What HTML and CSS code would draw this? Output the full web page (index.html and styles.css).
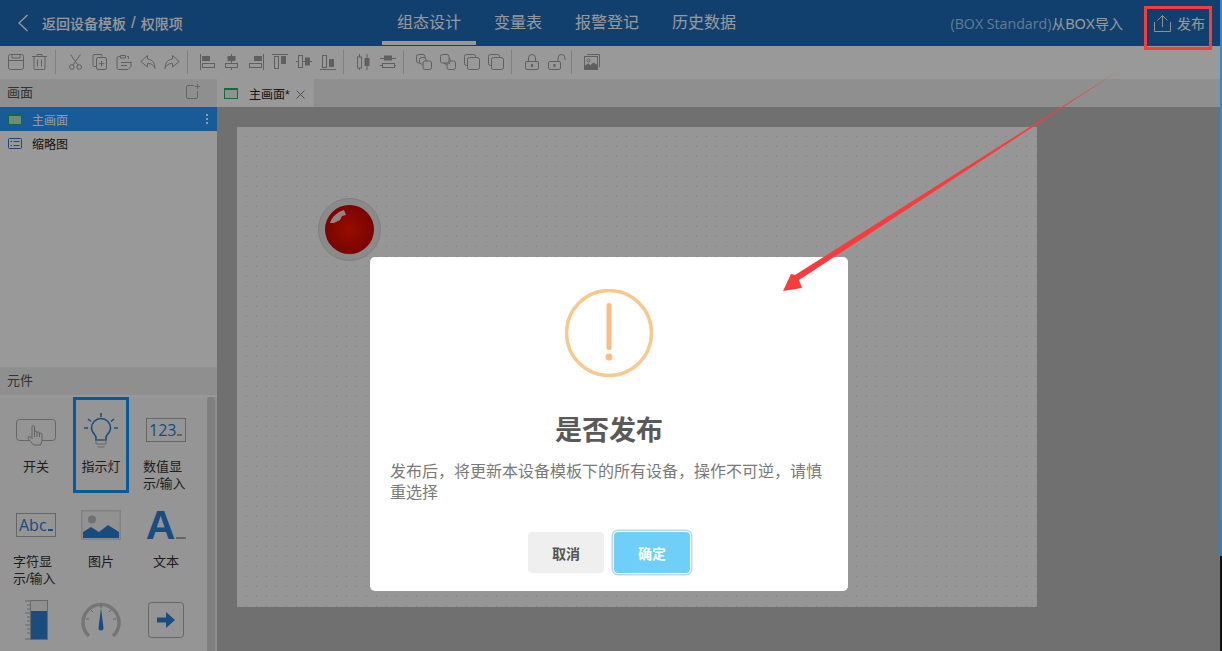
FILE: index.html
```html
<!DOCTYPE html>
<html lang="zh-CN">
<head>
  <meta charset="UTF-8">
  <title>组态设计</title>
  <link rel="stylesheet" href="styles.css">
</head>
<body>
  <div class="screen">
    <div class="app">
      <header class="topbar">
        <div class="back">
          <svg class="back-arrow" viewBox="0 0 12 18"><path d="M10.5 1 2 9l8.5 8"/></svg>
          <span class="crumb">返回设备模板</span><span class="slash">/</span><span class="crumb">权限项</span>
        </div>
        <nav class="nav">
          <a class="nav-item active">组态设计</a>
          <a class="nav-item">变量表</a>
          <a class="nav-item">报警登记</a>
          <a class="nav-item">历史数据</a>
        </nav>
        <div class="actions">
          <span class="box-name">(BOX Standard)</span><span class="box-import">从BOX导入</span>
          <span class="publish">
            <svg class="upload" viewBox="0 0 17 18"><path d="M.5 8v9.500h16V8M8.500 13V1.500M3.500 6.500l5-5 5 5"/></svg>
            发布
          </span>
        </div>
      </header>

      <div class="toolbar">
        <svg class="ico" viewBox="0 0 16 16"><rect x=".5" y=".5" width="15" height="15" rx="2"/><path d="M.5 6.500h15M4 .5v3.500h8V.5"/></svg>
        <svg class="ico" viewBox="0 0 16 16"><path d="M0 2.500h15M5 2.500V.5h5v2M2 2.500v12a1 1 0 0 0 1 1h9a1 1 0 0 0 1-1v-12M5.500 5.500v7M9.500 5.500v7"/></svg>
        <i class="sep"></i>
        <svg class="ico" viewBox="0 0 16 16"><path d="M2.500.5l7.500 10.500M12.500.5 5 11"/><circle cx="3.800" cy="13" r="2.300"/><circle cx="11.200" cy="13" r="2.300"/></svg>
        <svg class="ico" viewBox="0 0 16 16"><path d="M10 2.500V1.500a1 1 0 0 0-1-1H2a1 1 0 0 0-1 1v10a1 1 0 0 0 1 1h2"/><rect x="4.500" y="3.500" width="10" height="12" rx="1.500"/><path d="M9.500 7v5.500M6.800 9.700h5.500"/></svg>
        <svg class="ico" viewBox="0 0 16 16"><path d="M4 2.500H2.500a1.500 1.500 0 0 0-1.500 1.500v10a1.500 1.500 0 0 0 1.500 1.500H12l3-3V7.500M4.500 1.500h5v2.500h-5zM11 2.500h1.500V5M5 8.500h10M5 11.500h6"/></svg>
        <svg class="ico" viewBox="0 0 16 16"><path d="M7.500 1.500.8 7.500l6.700 5.500V9.500c3.500 0 6 1 7.500 5 0-6-3-9-7.500-9.500z"/></svg>
        <svg class="ico" viewBox="0 0 16 16"><path d="M8.500 1.500l6.700 6-6.700 5.500V9.500c-3.500 0-6 1-7.500 5 0-6 3-9 7.500-9.500z"/></svg>
        <i class="sep"></i>
        <svg class="ico" viewBox="0 0 16 16"><path d="M.5 0v16"/><rect class="solid" x="2" y="2" width="8" height="5"/><rect x="2.500" y="9.500" width="12" height="4"/></svg>
        <svg class="ico" viewBox="0 0 16 16"><path d="M7.500 0v16"/><rect class="solid" x="3.500" y="2" width="8" height="5"/><rect class="bg" x="1.500" y="9.500" width="12" height="4"/></svg>
        <svg class="ico" viewBox="0 0 16 16"><path d="M15.500 0v16"/><rect class="solid" x="6" y="2" width="8" height="5"/><rect x="1.500" y="9.500" width="12" height="4"/></svg>
        <svg class="ico" viewBox="0 0 16 16"><path d="M0 .5h16"/><rect x="2.500" y="2.500" width="4" height="12"/><rect class="solid" x="9" y="2" width="5" height="8"/></svg>
        <svg class="ico" viewBox="0 0 16 16"><path d="M0 7.500h16"/><rect class="bg" x="2.500" y="1.500" width="4" height="12"/><rect class="solid" x="9" y="3.500" width="5" height="8"/></svg>
        <svg class="ico" viewBox="0 0 16 16"><path d="M0 15.500h16"/><rect x="2.500" y="1.500" width="4" height="12"/><rect class="solid" x="9" y="5" width="5" height="8"/></svg>
        <i class="sep"></i>
        <svg class="ico" viewBox="0 0 16 16"><path d="M3.500 0v16M11 0v16"/><rect class="bg" x="1.500" y="3" width="4" height="11"/><rect class="solid" x="8.500" y="4" width="5" height="8"/></svg>
        <svg class="ico" viewBox="0 0 16 16"><path d="M0 4.500h16M0 11.500h16"/><rect class="solid" x="4" y="1.500" width="8" height="5"/><rect class="bg" x="2.500" y="9.500" width="12" height="4"/></svg>
        <i class="sep"></i>
        <svg class="ico" viewBox="0 0 16 16"><rect x=".5" y=".5" width="8.500" height="8.500" rx="2"/><rect class="bg" x="3.500" y="3.500" width="6.500" height="6.500" rx="2"/><rect class="bg" x="7" y="7" width="8.500" height="8.500" rx="2"/></svg>
        <svg class="ico" viewBox="0 0 16 16"><rect x="7" y="7" width="8.500" height="8.500" rx="2"/><rect class="bg" x="3.500" y="3.500" width="6.500" height="6.500" rx="2"/><rect class="bg" x=".5" y=".5" width="8.500" height="8.500" rx="2"/></svg>
        <svg class="ico" viewBox="0 0 16 16"><rect x=".5" y=".5" width="11" height="11" rx="2"/><rect class="bg" x="3.500" y="3.500" width="12" height="12" rx="2"/></svg>
        <svg class="ico" viewBox="0 0 16 16"><rect x="3.500" y="3.500" width="12" height="12" rx="2"/><path d="M3.500 11.500h-1a2 2 0 0 1-2-2v-7a2 2 0 0 1 2-2h7a2 2 0 0 1 2 2v1"/></svg>
        <i class="sep"></i>
        <svg class="ico" viewBox="0 0 16 16"><rect x="1.500" y="7.500" width="13" height="8" rx="1.500"/><path d="M4.500 7.500V4a3.500 3.500 0 0 1 7 0v3.500"/><rect class="solid" x="7" y="10" width="2" height="3"/></svg>
        <svg class="ico wide" viewBox="0 0 18 16"><rect x=".5" y="7.500" width="12" height="8" rx="1.500"/><path d="M10 7.500V4a3.500 3.500 0 0 1 7 0v2"/><rect class="solid" x="5.500" y="10" width="2" height="3"/></svg>
        <i class="sep"></i>
        <svg class="ico" viewBox="0 0 16 16"><path d="M3 .5h12.500V13"/><rect x=".5" y="2.500" width="13" height="13"/><circle cx="4.500" cy="6.500" r="1.500"/><path class="solid" d="M1 15v-3.500l3-2 2.500 1.500 3-2.500 4 2.500V15z"/></svg>
      </div>

      <div class="main">
        <aside class="side">
          <div class="side-title">
            <span>画面</span>
            <svg class="add-page" viewBox="0 0 15 15"><path d="M8 1.500H2a1.500 1.500 0 0 0-1.500 1.500v10A1.500 1.500 0 0 0 2 14.500h8a1.500 1.500 0 0 0 1.500-1.500V7M11.500 0v5M9 2.500h5"/></svg>
          </div>
          <ul class="pages">
            <li class="page active">
              <i class="page-ico green"></i>主画面
              <span class="more"><i></i><i></i><i></i></span>
            </li>
            <li class="page">
              <svg class="page-svg" viewBox="0 0 14 11"><rect x=".5" y=".5" width="13" height="10" rx="1"/><path d="M2.500 3.500h1.500M5.500 3.500h6M2.500 7.500h1.500M5.500 7.500h6"/></svg>
              缩略图
            </li>
          </ul>

          <div class="side-title parts-title"><span>元件</span></div>
          <div class="parts">
            <div class="parts-grid">
              <div class="part">
                <div class="part-ico">
                  <svg width="42" height="40" viewBox="0 0 42 40"><rect class="line" x="1.500" y="9.500" width="39" height="21" rx="3"/><path class="hand" d="M18.500 35c-1-2-5-5-5.500-7-.3-1.500 1.500-1.500 3-.5l1 1V17c0-2 2.500-2 2.500 0v5c0-1.500 2.500-1.500 2.500 0v1c0-1.500 2.500-1.500 2.500 0v1c0-1.300 2.500-1.300 2.500.5V31l-1.500 4zM19.500 22v5M22 23v4M24.500 24v3"/></svg>
                </div>
                <div class="part-name">开关</div>
              </div>
              <div class="part selected">
                <div class="part-ico">
                  <svg width="36" height="40" viewBox="0 0 36 40"><path class="blue-line" d="M18 3v4M5 9l3 2.500M31 9l-3 2.500M1 18h4M31 18h4"/><path class="blue-line" d="M13 30v-2.500c0-2-1.500-3-3-5-1-1.500-1.500-3-1.500-4.500a9.500 9.500 0 0 1 19 0c0 1.500-.5 3-1.500 4.500-1.500 2-3 3-3 5V30z"/><path class="line" d="M13 30h10v4H13zM14.500 37h7"/></svg>
                </div>
                <div class="part-name">指示灯</div>
              </div>
              <div class="part">
                <div class="part-ico">
                  <span class="value-box">123<i></i></span>
                </div>
                <div class="part-name">数值显示/输入</div>
              </div>
              <div class="part">
                <div class="part-ico">
                  <span class="value-box">Abc<i class="blue"></i></span>
                </div>
                <div class="part-name">字符显示/输入</div>
              </div>
              <div class="part">
                <div class="part-ico">
                  <svg width="40" height="30" viewBox="0 0 40 30"><rect x="0" y="0" width="40" height="30" fill="#d8d8d8"/><rect x="1.500" y="1.500" width="37" height="27" fill="#f4f4f4"/><circle cx="11" cy="9.500" r="4" fill="#bdbdbd"/><path d="M2 28v-6l8-5 8 5 9-7 11 7v6z" fill="#2c7ed2"/></svg>
                </div>
                <div class="part-name">图片</div>
              </div>
              <div class="part">
                <div class="part-ico">
                  <span class="big-a">A</span><i class="big-a-line"></i>
                </div>
                <div class="part-name">文本</div>
              </div>
              <div class="part">
                <div class="part-ico">
                  <svg width="24" height="40" viewBox="0 0 24 40"><path class="line" d="M1 1h5M3 5h3M3 9h3M1 13h5M3 17h3M3 21h3M1 25h5M3 29h3M3 33h3M1 39h5"/><rect x="6.500" y=".5" width="17" height="39" fill="#eee" stroke="#b0b0b0"/><rect x="7" y="11" width="16" height="28" fill="#2a80d6"/></svg>
                </div>
                <div class="part-name"></div>
              </div>
              <div class="part">
                <div class="part-ico">
                  <svg width="40" height="36" viewBox="0 0 40 36"><path d="M8 34a18 18 0 1 1 24 0" fill="none" stroke="#c4c4c4" stroke-width="3.500"/><path class="line" d="M5 17h3M32 17h3M10 8l2 2M30 8l-2 2M20 3v3"/><path d="M20 6l2.500 20a2.500 2.500 0 0 1-5 0z" fill="#2a80d6"/></svg>
                </div>
                <div class="part-name"></div>
              </div>
              <div class="part">
                <div class="part-ico">
                  <svg width="36" height="36" viewBox="0 0 36 36"><rect class="line" x=".5" y=".5" width="35" height="35" rx="3"/><path d="M9 15.500h9V10l9 8-9 8v-5.500H9z" fill="#2a80d6"/></svg>
                </div>
                <div class="part-name"></div>
              </div>
            </div>
            <div class="scroll-track"><div class="scroll-thumb"></div></div>
          </div>
        </aside>

        <section class="work">
          <div class="tabs">
            <div class="tab">
              <i class="page-ico green flat"></i>
              <span>主画面*</span>
              <svg class="tab-close" viewBox="0 0 9 9"><path d="M.5.5l8 8M8.500.5l-8 8"/></svg>
            </div>
          </div>
          <div class="stage">
            <div class="canvas">
              <div class="lamp">
                <div class="lamp-glass"></div>
                <svg class="lamp-shine" viewBox="0 0 16 14"><path d="M0 13C2 7 7 2 14 0l2 5-4 1-2 4-6 3z"/></svg>
              </div>
            </div>
          </div>
        </section>
      </div>

      <div class="mask"></div>

      <div class="dialog">
        <svg class="warn" viewBox="0 0 88 88">
          <circle cx="44" cy="44" r="42.500" fill="none" stroke="#f8c98c" stroke-width="3.500"/>
          <rect x="41.500" y="14" width="5" height="47" rx="2.500" fill="#fbbc85"/>
          <circle cx="44" cy="68" r="3.500" fill="#fbbc85"/>
        </svg>
        <h2 class="dialog-title">是否发布</h2>
        <p class="dialog-text">发布后，将更新本设备模板下的所有设备，操作不可逆，请慎重选择</p>
        <div class="dialog-btns">
          <button class="btn cancel">取消</button>
          <button class="btn ok">确定</button>
        </div>
      </div>

      <!-- 截图上的标注 -->
      <div class="mark-box"></div>
      <svg class="mark-arrow" viewBox="0 0 1222 651">
        <path d="M1117 72 799 280 802 288 783 291 791 274 795 275z"/>
      </svg>
    </div>
    <div class="edge"><i class="edge-top"></i><i class="edge-mid"></i><i class="edge-low"></i></div>
  </div>
</body>
</html>
```

FILE: styles.css
```css
* {
  box-sizing: border-box;
}

body {
  margin: 0;
  font-family: "Liberation Sans", "Noto Sans CJK SC", sans-serif;
  color: #333;
  overflow: hidden;
}

.screen {
  display: flex;
  width: 1222px;
  height: 651px;
}

.app {
  position: relative;
  flex: 1;
  display: flex;
  flex-direction: column;
  height: 651px;
  overflow: hidden;
  background: #bbb;
}

/* 顶部导航 */
.topbar {
  display: flex;
  align-items: center;
  height: 46px;
  flex: none;
  background: #1d6bba;
  color: #fff;
}

.back {
  display: flex;
  align-items: center;
  width: 382px;
  padding-left: 17px;
  font-size: 14px;
  font-weight: 500;
}

.back-arrow {
  width: 12px;
  height: 18px;
  margin-right: 13px;
  fill: none;
  stroke: #fff;
  stroke-width: 1.300;
}

.slash {
  margin: 0 5px;
  font-size: 17px;
}

.nav {
  display: flex;
  gap: 3px;
  height: 46px;
}

.nav-item {
  padding: 0 15px;
  font-size: 16px;
  line-height: 45px;
  border-bottom: 4px solid transparent;
  height: 45px;
}

.nav-item.active {
  border-bottom-color: #fff;
}

.actions {
  display: flex;
  align-items: center;
  margin-left: auto;
  padding-right: 15px;
  font-size: 14px;
}

.box-name {
  color: #a8cdf0;
  font-family: "Open Sans", "Noto Sans CJK SC", sans-serif;
  font-size: 14.200px;
}

.publish {
  display: flex;
  align-items: center;
  margin-left: 31px;
  gap: 6px;
}

.upload {
  width: 17px;
  height: 18px;
  fill: none;
  stroke: #eee;
}

/* 工具栏 */
.toolbar {
  display: flex;
  align-items: center;
  gap: 8px;
  height: 33px;
  flex: none;
  padding: 0 0 1px 8px;
  background: #fff;
}

.ico {
  width: 16px;
  height: 16px;
  flex: none;
  fill: none;
  stroke: #a0a0a0;
}

.ico.wide {
  width: 18px;
  margin-right: -2px;
}

.ico .solid {
  fill: #a0a0a0;
  stroke: none;
}

.ico .bg {
  fill: #fff;
}

.sep {
  width: 1px;
  height: 24px;
  margin: 0 4px 0 -1px;
  background: #d6d6d6;
}

.main {
  flex: 1;
  display: flex;
  min-height: 0;
}

/* 左侧面板 */
.side {
  width: 217px;
  flex: none;
  display: flex;
  flex-direction: column;
  background: #fff;
}

.side-title {
  display: flex;
  align-items: center;
  justify-content: space-between;
  height: 28px;
  flex: none;
  padding: 0 16px 3px 7px;
  background: #eee;
  font-size: 13px;
  color: #555;
}

.add-page {
  width: 15px;
  height: 15px;
  fill: none;
  stroke: #aaa;
}

.pages {
  flex: 1;
  margin: 0;
  padding: 0;
  list-style: none;
  font-size: 12px;
}

.page {
  display: flex;
  align-items: center;
  height: 24px;
  padding-left: 8px;
  color: #222;
}

.page.active {
  background: #2a96ff;
  color: #fff;
}

.page-ico {
  width: 14px;
  height: 11px;
  margin-right: 10px;
  background: #b9e6c9;
}

.page-ico.green {
  border: 1.500px solid #1db368;
  border-top-width: 2px;
}

.page-ico.flat {
  background: #eaf7ef;
  margin-right: 0;
}

.page-svg {
  width: 14px;
  height: 11px;
  margin-right: 10px;
  fill: none;
  stroke: #2d79dd;
}

.more {
  display: flex;
  flex-direction: column;
  gap: 2px;
  margin-left: auto;
  margin-right: 9px;
}

.more i {
  width: 2px;
  height: 2px;
  background: #fff;
}

.parts {
  height: 256px;
  flex: none;
  display: flex;
  overflow: hidden;
  background: #f8f8f8;
  border-top: 2px solid #fff;
}

.parts-grid {
  display: grid;
  grid-template-columns: repeat(3, 56px);
  grid-auto-rows: 95px;
  column-gap: 9px;
  width: 207px;
  flex: none;
  padding-left: 8px;
}

.part {
  display: flex;
  flex-direction: column;
  align-items: center;
  height: 96px;
  padding-top: 8px;
  border: 3px solid transparent;
}

.part.selected {
  border-color: #0f96ff;
}

.part-ico {
  position: relative;
  display: flex;
  align-items: center;
  justify-content: center;
  height: 44px;
  flex: none;
  margin-bottom: 6px;
}

.part-name {
  width: 46px;
  flex: none;
  font-size: 13px;
  line-height: 17px;
  color: #333;
  display: flex;
  justify-content: center;
  text-align: left;
}

.line {
  fill: none;
  stroke: #aaa;
  stroke-width: 1;
}

.hand {
  fill: #f8f8f8;
  stroke: #999;
  stroke-width: .9;
}

.blue-line {
  fill: none;
  stroke: #2a80d6;
  stroke-width: 1.600;
}

.value-box {
  position: relative;
  display: block;
  width: 40px;
  height: 24px;
  border: 1px solid #aaa;
  padding-left: 2px;
  font-size: 16px;
  line-height: 22px;
  color: #2a80d6;
  font-family: "Open Sans", sans-serif;
  white-space: nowrap;
}

.value-box i {
  display: inline-block;
  width: 5px;
  height: 2px;
  margin-left: 1px;
  background: #aaa;
}

.value-box i.blue {
  background: #2a80d6;
}

.big-a {
  font-size: 41px;
  line-height: 44px;
  font-weight: 700;
  color: #2a80d6;
  font-family: "Liberation Sans", sans-serif;
}

.big-a-line {
  width: 10px;
  height: 2px;
  margin: 26px 0 0 1px;
  background: #aaa;
}

.scroll-track {
  width: 10px;
  flex: none;
  background: #eee;
}

.scroll-thumb {
  width: 8px;
  height: 100%;
  background: #d4d4d4;
  border-radius: 4px 4px 0 0;
}

/* 画布 */
.work {
  flex: 1;
  display: flex;
  flex-direction: column;
  min-width: 0;
}

.tabs {
  display: flex;
  height: 28px;
  flex: none;
  background: #eee;
}

.tab {
  display: flex;
  align-items: center;
  width: 97px;
  padding-left: 7px;
  background: #fff;
  font-size: 12px;
  gap: 11px;
  color: #222;
}

.tab-close {
  width: 9px;
  height: 9px;
  margin-left: -5px;
  margin-top: 2px;
  fill: none;
  stroke: #888;
}

.stage {
  flex: 1;
  padding: 20px;
  overflow: hidden;
}

.canvas {
  position: relative;
  width: 800px;
  height: 480px;
  background-color: #fafafa;
  background-image: radial-gradient(circle at 9.500px 9.500px, #dadada .8px, transparent 1.100px);
  background-size: 10px 10px;
}

.lamp {
  position: absolute;
  left: 81px;
  top: 71px;
  width: 63px;
  height: 63px;
  padding: 6px;
  border-radius: 50%;
  background: #e6e6e6;
  border: 1px solid #d4d4d4;
}

.lamp-glass {
  width: 100%;
  height: 100%;
  border-radius: 50%;
  background: radial-gradient(circle, #ff1600 0, #b40000 100%);
}

.lamp-shine {
  position: absolute;
  left: 11px;
  top: 11px;
  width: 16px;
  height: 14px;
  fill: #fff;
  opacity: .85;
}

/* 遮罩和弹窗 */
.mask {
  position: absolute;
  inset: 0;
  background: rgba(0, 0, 0, .4);
}

.dialog {
  position: absolute;
  left: 370px;
  top: 257px;
  width: 478px;
  height: 334px;
  padding: 32px 20px 0;
  background: #fff;
  border-radius: 5px;
  text-align: center;
}

.warn {
  display: block;
  width: 88px;
  height: 88px;
  margin: 0 auto;
}

.dialog-title {
  margin: 34px 0 0;
  font-size: 27px;
  line-height: 40px;
  font-weight: 700;
  color: #595959;
}

.dialog-text {
  margin: 10px 0 0;
  font-size: 16px;
  line-height: 21px;
  color: #797979;
  text-align: left;
}

.dialog-btns {
  display: flex;
  justify-content: center;
  gap: 10px;
  margin-top: 29px;
}

.btn {
  width: 76px;
  height: 41px;
  border: none;
  border-radius: 4px;
  font-family: inherit;
  font-size: 14px;
  font-weight: 700;
}

.cancel {
  background: #efefef;
  color: #555;
}

.ok {
  background: #70cff8;
  color: #fff;
  box-shadow: 0 0 0 1px #fff, 0 0 0 2.500px #b9d7ea;
}

/* 标注 */
.mark-box {
  position: absolute;
  left: 1144px;
  top: 6px;
  width: 68px;
  height: 44px;
  border: 3px solid #f83c3c;
}

.mark-arrow {
  position: absolute;
  left: 0;
  top: 0;
  width: 1222px;
  height: 651px;
  fill: #f83c3c;
}

/* 右边缘 */
.edge {
  display: flex;
  flex-direction: column;
  width: 2px;
  flex: none;
}

.edge i {
  display: block;
}

.edge-top {
  flex: 1;
  background: #2b8bd8;
}

.edge-mid {
  height: 36px;
  background: #1f86e0;
}

.edge-low {
  height: 95px;
  background: #111;
}
```
